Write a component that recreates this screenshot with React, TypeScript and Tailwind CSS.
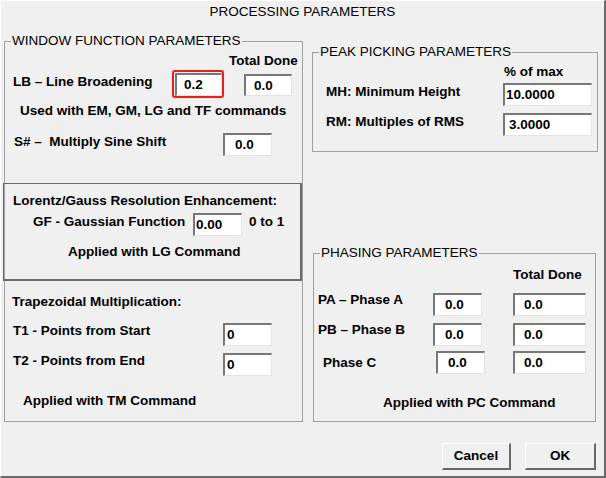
import type { ReactNode } from "react";

function Legend({ children }: { children: ReactNode }) {
  return (
    <div className="absolute -top-[9px] left-[6px] bg-[#f0f0f0] px-[1px] font-normal whitespace-nowrap">
      {children}
    </div>
  );
}

function Field({ className, children }: { className: string; children: ReactNode }) {
  return (
    <div
      className={
        "flex items-center bg-white border-t-2 border-l-2 border-r border-b border-t-[#787878] border-l-[#787878] border-r-[#e3e3e3] border-b-[#e3e3e3] font-bold " +
        className
      }
    >
      {children}
    </div>
  );
}

function Button({ className, children }: { className: string; children: ReactNode }) {
  return (
    <div
      className={
        "flex h-[27px] items-center justify-center border-t border-l border-t-white border-l-white border-r-2 border-b-2 border-r-[#696969] border-b-[#696969] font-bold " +
        className
      }
    >
      {children}
    </div>
  );
}

export default function App() {
  return (
    <div className="h-[478px] w-[606px] overflow-hidden border-t border-l border-t-white border-l-white border-r-2 border-b-2 border-r-[#6a6a6a] border-b-[#6a6a6a] bg-[#f0f0f0] font-['Liberation_Sans',Arial,sans-serif] text-[13.5px] leading-[16px] text-black">
      <div className="h-[19px] pt-[3px] text-center">PROCESSING PARAMETERS</div>

      <div className="flex pl-[3px]">
        {/* window function group */}
        <div className="relative mt-[21px] flex h-[381px] w-[299px] flex-col border border-[#a0a0a0] font-bold">
          <Legend>WINDOW FUNCTION PARAMETERS</Legend>

          <div className="flex h-[141px] flex-col">
            <div className="mt-[11px] pl-[224px]">Total Done</div>
            <div className="mt-[1px] flex h-[28px] items-start">
              <div className="mt-[4px] w-[167px] pl-[8px]">LB – Line Broadening</div>
              <div className="h-[28px] w-[52px] rounded-[3px] border-2 border-[#e3211b] p-[1px] shadow-[0_0_1px_#f29a96]">
                <Field className="h-[23px] w-[47px] pl-[7px]">0.2</Field>
              </div>
              <Field className="ml-[20px] mt-[4px] h-[22px] w-[48px] pl-[8px]">0.0</Field>
            </div>
            <div className="mt-[5px] pl-[15px]">Used with EM, GM, LG and TF commands</div>
            <div className="mt-[14px] flex items-start">
              <div className="mt-[1px] w-[218px] whitespace-pre pl-[9px]">S# –  Multiply Sine Shift</div>
              <Field className="h-[23px] w-[49px] pl-[10px]">0.0</Field>
            </div>
          </div>

          <div className="-ml-[2px] flex h-[98px] w-[299px] flex-col border border-r-2 border-b-2 border-[#6b6b6b]">
            <div className="mt-[9px] pl-[9px]">Lorentz/Gauss Resolution Enhancement:</div>
            <div className="mt-[4px] flex items-start">
              <div className="mt-[1px] w-[189px] pl-[29px]">GF - Gaussian Function</div>
              <Field className="h-[23px] w-[49px] pl-[1px]">0.00</Field>
              <div className="ml-[7px] mt-[1px]">0 to 1</div>
            </div>
            <div className="mt-[8px] pl-[64px]">Applied with LG Command</div>
          </div>

          <div className="mt-[13px] pl-[7px]">Trapezoidal Multiplication:</div>
          <div className="mt-[13px] flex items-start">
            <div className="w-[218px] pl-[8px]">T1 - Points from Start</div>
            <Field className="h-[23px] w-[49px] pl-[2px]">0</Field>
          </div>
          <div className="mt-[7px] flex items-start">
            <div className="w-[218px] pl-[8px]">T2 - Points from End</div>
            <Field className="h-[23px] w-[49px] pl-[2px]">0</Field>
          </div>
          <div className="mt-[17px] pl-[18px]">Applied with TM Command</div>
        </div>

        <div className="ml-[9px] flex flex-col">
          {/* peak picking group */}
          <div className="relative mt-[32px] flex h-[100px] w-[286px] flex-col border border-[#a0a0a0] font-bold">
            <Legend>PEAK PICKING PARAMETERS</Legend>
            <div className="mt-[11px] pl-[191px]">% of max</div>
            <div className="mt-[3px] flex items-start">
              <div className="mt-[1px] w-[190px] pl-[13px]">MH: Minimum Height</div>
              <Field className="h-[23px] w-[89px] pl-[1px]">10.0000</Field>
            </div>
            <div className="mt-[7px] flex items-start">
              <div className="mt-[1px] w-[190px] pl-[13px]">RM: Multiples of RMS</div>
              <Field className="h-[23px] w-[89px] pl-[4px]">3.0000</Field>
            </div>
          </div>

          {/* phasing group */}
          <div className="relative mt-[101px] ml-[1px] flex h-[169px] w-[283px] flex-col border border-[#a0a0a0] font-bold">
            <Legend>PHASING PARAMETERS</Legend>
            <div className="mt-[13px] pl-[199px]">Total Done</div>
            <div className="mt-[10px] flex items-start">
              <div className="-mt-[1px] w-[119px] pl-[4px]">PA – Phase A</div>
              <Field className="h-[23px] w-[49px] pl-[10px]">0.0</Field>
              <Field className="ml-[31px] h-[23px] w-[73px] pl-[9px]">0.0</Field>
            </div>
            <div className="mt-[7px] flex items-start">
              <div className="-mt-[1px] w-[119px] pl-[4px]">PB – Phase B</div>
              <Field className="h-[23px] w-[49px] pl-[10px]">0.0</Field>
              <Field className="ml-[31px] h-[23px] w-[73px] pl-[9px]">0.0</Field>
            </div>
            <div className="mt-[5px] flex items-start">
              <div className="mt-[4px] w-[122px] pl-[9px]">Phase C</div>
              <Field className="h-[23px] w-[49px] pl-[10px]">0.0</Field>
              <Field className="ml-[28px] h-[23px] w-[73px] pl-[9px]">0.0</Field>
            </div>
            <div className="mt-[21px] pl-[69px]">Applied with PC Command</div>
          </div>
        </div>
      </div>

      <div className="mt-[21px] flex justify-end gap-[14px] pr-[8px]">
        <Button className="w-[69px]">Cancel</Button>
        <Button className="w-[71px]">OK</Button>
      </div>
    </div>
  );
}
